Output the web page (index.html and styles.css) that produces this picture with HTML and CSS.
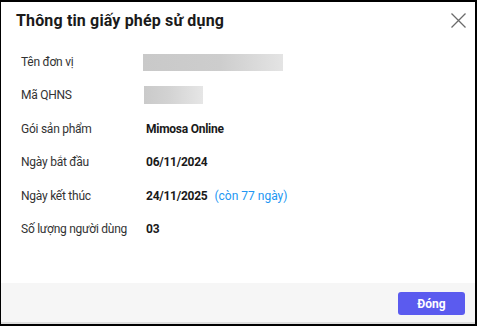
FILE: index.html
```html
<!DOCTYPE html>
<html lang="vi">
<head>
    <meta charset="UTF-8">
    <meta name="viewport" content="width=device-width, initial-scale=1.0">
    <title>Thông tin giấy phép sử dụng</title>
    <link rel="stylesheet" href="styles.css">
</head>
<body>
    <div class="modal">
        <div class="modal-header">
            <h2>Thông tin giấy phép sử dụng</h2>
            <button class="close-btn" aria-label="Đóng">
                <svg width="15" height="15" viewBox="0 0 15 15">
                    <path d="M0.5 0.5 L14.5 14.5 M14.5 0.5 L0.5 14.5" stroke="#6b6b6b" stroke-width="1.3" fill="none"/>
                </svg>
            </button>
        </div>

        <div class="modal-body">
            <div class="info-grid">
                <div class="label">Tên đơn vị</div>
                <div class="value"><span class="mask mask-long"></span></div>

                <div class="label">Mã QHNS</div>
                <div class="value"><span class="mask mask-short"></span></div>

                <div class="label">Gói sản phẩm</div>
                <div class="value">Mimosa Online</div>

                <div class="label">Ngày bắt đầu</div>
                <div class="value">06/11/2024</div>

                <div class="label">Ngày kết thúc</div>
                <div class="value">24/11/2025 <span class="remain">(còn 77 ngày)</span></div>

                <div class="label">Số lượng người dùng</div>
                <div class="value">03</div>
            </div>
        </div>

        <div class="modal-footer">
            <button class="btn-primary">Đóng</button>
        </div>
    </div>
</body>
</html>
```

FILE: styles.css
```css
html, body {
    height: 100%;
}
body {
    margin: 0;
    font-family: Roboto, "Noto Sans", sans-serif;
    background: #fff;
}
.modal {
    height: 100%;
    box-sizing: border-box;
    display: flex;
    flex-direction: column;
    border-style: solid;
    border-color: #000;
    border-width: 2px 2px 2px 1px;
}
.modal-header {
    display: flex;
    justify-content: space-between;
    align-items: flex-start;
    padding: 9px 9px 0 15px;
}
.modal-header h2 {
    margin: 0;
    font-size: 16px;
    line-height: 20px;
    font-weight: 700;
    letter-spacing: 0.15px;
    color: #1a1a1a;
}
.close-btn {
    border: none;
    background: none;
    padding: 0;
    margin-top: 2px;
    width: 15px;
    height: 15px;
    cursor: pointer;
}
.close-btn svg {
    display: block;
}
.modal-body {
    flex: 1;
    padding: 21px 20px 0;
}
.info-grid {
    display: grid;
    grid-template-columns: 125px auto;
    grid-auto-rows: 20px;
    row-gap: 13.4px;
    align-items: center;
    font-size: 12px;
    letter-spacing: -0.25px;
}
.label {
    color: #333;
}
.value {
    font-weight: 700;
    color: #1a1a1a;
    display: flex;
    align-items: center;
}
.remain {
    font-weight: 400;
    color: #2196f3;
    margin-left: 7px;
    letter-spacing: 0;
}
.mask {
    display: block;
    height: 17px;
    margin-left: -3px;
}
.mask-long {
    width: 140px;
    background: linear-gradient(to right, #c9c9c9 0%, #cdcdcd 55%, #e4e4e4 100%);
}
.mask-short {
    width: 59px;
    height: 18px;
    margin-left: -2px;
    background: linear-gradient(to right, #cacaca 0%, #d2d2d2 40%, #e6e6e6 100%);
}
.modal-footer {
    display: flex;
    justify-content: flex-end;
    padding: 9px 10px 7px;
    background: #f6f6f6;
    border-bottom: 2px solid #dedede;
}
.btn-primary {
    width: 67px;
    height: 23px;
    border: none;
    border-radius: 3px;
    background: #5b5bef;
    color: #fff;
    font-family: Roboto, "Noto Sans", sans-serif;
    font-size: 12px;
    font-weight: 700;
    cursor: pointer;
}
```
